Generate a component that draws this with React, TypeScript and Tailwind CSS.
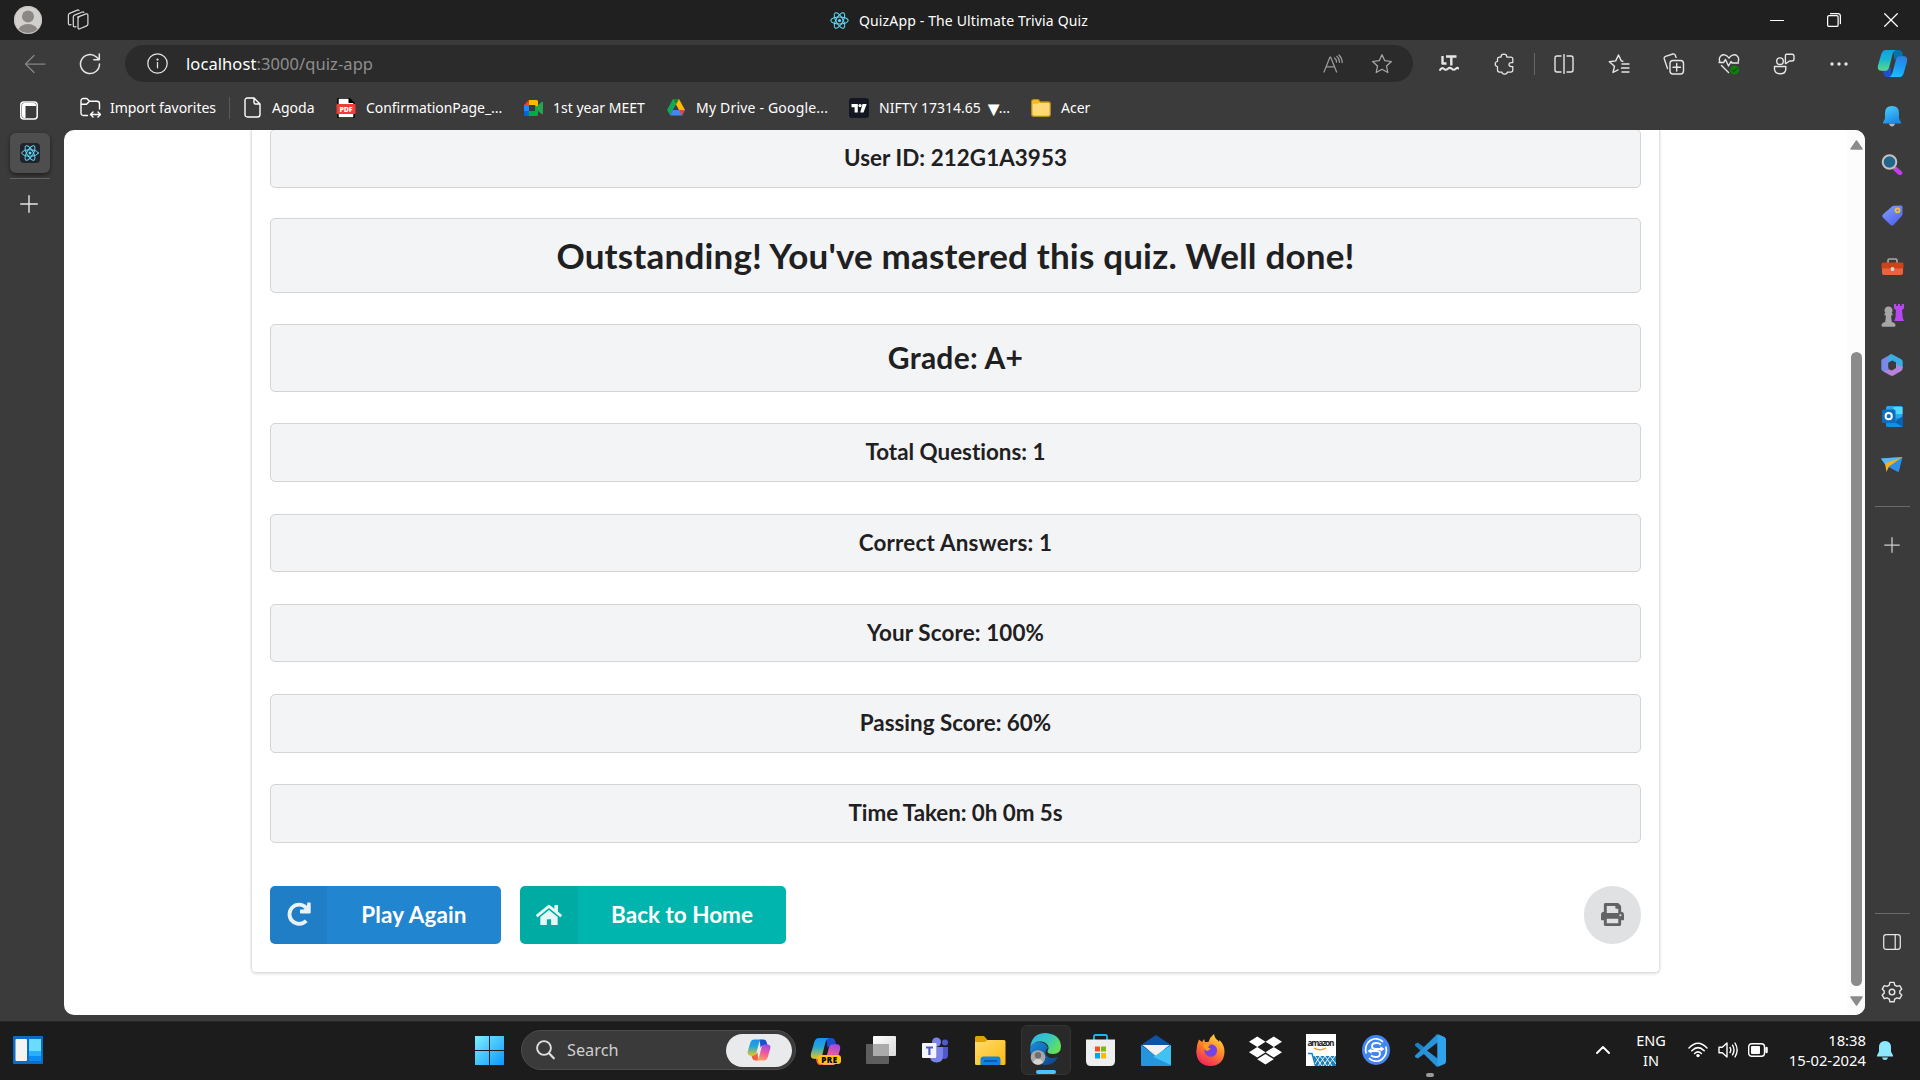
import React from "react";
import { FaHome, FaPrint, FaDropbox } from "react-icons/fa";

type SvgProps = {
  size?: number;
  w?: number;
  h?: number;
  box?: string;
  className?: string;
  children: React.ReactNode;
};

function Svg({ size = 20, w, h, box = "0 0 20 20", className = "", children }: SvgProps) {
  return (
    <svg
      width={w ?? size}
      height={h ?? size}
      viewBox={box}
      fill="none"
      stroke="currentColor"
      strokeWidth={1.25}
      strokeLinecap="round"
      strokeLinejoin="round"
      className={`block shrink-0 ${className}`}
    >
      {children}
    </svg>
  );
}

function ReactLogo({ size }: { size: number }) {
  return (
    <Svg size={size} box="0 0 24 24" className="text-[#61dafb]">
      <g strokeWidth="1.3">
        <ellipse cx="12" cy="12" rx="11" ry="4.3" />
        <ellipse cx="12" cy="12" rx="11" ry="4.3" transform="rotate(60 12 12)" />
        <ellipse cx="12" cy="12" rx="11" ry="4.3" transform="rotate(120 12 12)" />
      </g>
      <circle cx="12" cy="12" r="2" fill="currentColor" stroke="none" />
    </Svg>
  );
}

function TitleBar() {
  return (
    <header className="flex h-10 shrink-0 items-center justify-between bg-[#202020] text-white">
      <div className="flex w-[400px] items-center">
        <div className="ml-[14px] size-7">
          <svg width="28" height="28" viewBox="0 0 28 28">
            <clipPath id="avatar">
              <circle cx="14" cy="14" r="14" />
            </clipPath>
            <g clipPath="url(#avatar)">
              <rect width="28" height="28" fill="#d2d0ce" />
              <circle cx="14" cy="10.5" r="6" fill="#8a8785" />
              <ellipse cx="14" cy="25.5" rx="10" ry="7.5" fill="#8a8785" />
            </g>
            <circle cx="14" cy="14" r="13.5" fill="none" stroke="#c4c2c0" />
          </svg>
        </div>
        <Svg w={22} h={22} box="0 0 22 22" className="ml-[25px] text-[#d6d6d6]">
          <path d="M10.600 8.200 19 4.900q1.900-.6 1.900 1.300V15q0 1.300-1.200 1.800l-6.800 3q-1.900.7-1.900-1.200V9.900q0-1.100.9-1.700" />
          <path d="M8.900 17.600q-2.600 1-2.600-1.200V7.900q0-1.200 1.200-1.700l7.800-3.200q1.100-.4 1.600.3" />
          <path d="M4 15.600q-2.600.8-2.600-1.300V6q0-1.200 1.200-1.700L10.300 1.100q1.100-.4 1.700.3" />
        </Svg>
      </div>
      <div className="flex items-center">
        <ReactLogo size={19} />
        <span className="ml-[10px] w-[231px] font-['Noto_Sans',sans-serif] text-[14px] tracking-[0.14px] whitespace-nowrap">
          QuizApp - The Ultimate Trivia Quiz
        </span>
      </div>
      <div className="flex w-[400px] items-center justify-end gap-[43px] pr-[22px]">
        <Svg size={14} box="0 0 14 14">
          <path d="M.5 7.500h13" strokeWidth="1.100" />
        </Svg>
        <Svg size={14} box="0 0 14 14">
          <rect x=".6" y="2.600" width="10.500" height="10.800" rx="1.500" />
          <path d="M3.500.6h7.500q2.400 0 2.400 2.400v7.500" />
        </Svg>
        <Svg size={14} box="0 0 14 14">
          <path d="m.7.7 12.600 12.600M13.300.7.7 13.300" />
        </Svg>
      </div>
    </header>
  );
}

function CopilotColor({ size, blue = false }: { size: number; blue?: boolean }) {
  const id = blue ? "cb" : "cc";
  return (
    <svg width={size} height={size} viewBox="0 0 32 32" className="block shrink-0">
      <defs>
        <linearGradient id={`${id}1`} x1="0" y1="0" x2="0" y2="1">
          <stop offset="0" stopColor={blue ? "#0f9fe8" : "#1b8ff0"} />
          <stop offset=".45" stopColor={blue ? "#16b7d0" : "#25a7d8"} />
          <stop offset="1" stopColor={blue ? "#5ed88a" : "#e8c81c"} />
        </linearGradient>
        <linearGradient id={`${id}2`} x1=".6" y1="0" x2=".3" y2="1">
          <stop offset="0" stopColor={blue ? "#2f7fe0" : "#a24be8"} />
          <stop offset=".5" stopColor={blue ? "#1b9df6" : "#ee5a9a"} />
          <stop offset="1" stopColor={blue ? "#18c0ff" : "#ffa257"} />
        </linearGradient>
      </defs>
      <path d="M17 2h5q3 0 4 3l1.500 5H22q-3 0-4 3z" fill={blue ? "#0a6fae" : "#1a4fd0"} />
      <path d="M15 30h-4q-3 0-4-3l-1.500-5H10q3 0 4-3z" fill={blue ? "#1c4fd8" : "#f2603c"} />
      <path d="M9 2h10.500q-2.500.8-3.500 4.500L12.500 20q-.9 3.500-4.500 3.500H4.500Q0 23.500 1 18L4.500 6Q5.800 2 9 2z" fill={`url(#${id}1)`} />
      <path d="M23 30H12.500q2.500-.8 3.500-4.500L19.500 12q.9-3.500 4.500-3.500h3.500Q32 8.500 31 14l-3.500 12q-1.300 4-4.500 4z" fill={`url(#${id}2)`} />
    </svg>
  );
}

function Toolbar() {
  return (
    <div className="flex h-[47px] shrink-0 items-center text-[#e6e6e6]">
      <Svg w={22} h={20} box="0 0 22 20" className="ml-[24px] text-[#858585]">
        <path d="M21 10H1.500M10 1.500 1.500 10l8.500 8.500" />
      </Svg>
      <Svg size={22} box="0 0 22 22" className="ml-[33px]">
        <path d="M20.500 11A9.500 9.500 0 1 1 17.400 4l2.600 2.400M20.300 1v5.700h-5.500" strokeWidth="1.500" />
      </Svg>
      <div className="ml-[24px] flex h-[37px] w-[1288px] items-center rounded-full bg-[#2b2b2b]">
        <Svg size={21} box="0 0 21 21" className="ml-[22px]">
          <circle cx="10.500" cy="10.500" r="9.700" />
          <path d="M10.500 9.500v5.300" />
          <circle cx="10.500" cy="6.500" r=".5" fill="currentColor" />
        </Svg>
        <span className="ml-[18px] grow pt-px font-['Noto_Sans',sans-serif] text-[16.5px] tracking-[0.08px] whitespace-nowrap text-[#8f8f8f]">
          <span className="text-white">localhost</span>:3000/quiz-app
        </span>
        <Svg size={20} className="mr-[28px] text-[#9a9a9a]">
          <path d="m1 18 6-15h.6l6 15M3.300 12.800h8M11.500 4q2 1.600 2 4M13.800 2.300q2.700 2.500 2.700 6M16 1q3.200 3.200 3.200 7.500" />
        </Svg>
        <Svg size={22} box="0 0 22 22" className="mr-[20px] text-[#a8a8a8]">
          <path d="m11 1.700 2.800 6 6.600.8-4.900 4.500 1.300 6.500L11 16.300l-5.800 3.200 1.300-6.500L1.600 8.500l6.600-.8z" />
        </Svg>
      </div>
      <Svg size={20} className="mt-px ml-[26px]">
        <path d="M3.500 2v7.500h4M7 2.500h10.500M12.300 2.500v9" strokeWidth="2.400" strokeLinecap="butt" />
        <path d="M1 16q1.800-3 3.800-1.200t4 0 4 0 4 0 2.500-.3" strokeWidth="2" />
      </Svg>
      <Svg size={22} box="0 0 22 22" className="ml-[35px]">
        <path d="M7 4q0-2.800 2.900-2.800T12.800 4h4q2 0 2 2v3.600h-1.500q-2.300 0-2.300 2t2.300 2h1.500V17q0 2-2 2h-3.500q0 2-2.700 2T8 19H5.500q-2 0-2-2v-3.500q-2.300-.2-2.300-2.500t2.300-2.500V6q0-2 2-2z" />
      </Svg>
      <div className="ml-[18px] h-[22px] w-px bg-[#656565]" />
      <Svg size={20} className="ml-[19px]">
        <path d="M7 2H3Q1 2 1 4v12q0 2 2 2h4M13 2h4q2 0 2 2v12q0 2-2 2h-4M10 .6v18.800" strokeWidth="1.400" />
      </Svg>
      <Svg w={22} h={22} box="0 0 22 22" className="ml-[34px]">
        <path d="M6.500 13.200 5 19.500l5-2.700M6.500 13.200 1.300 8.700l6.400-.8L10.500 2l2.800 5.900 1.500.4M14 11h7M13.500 15h7.500M14 19h7" strokeWidth="1.400" />
      </Svg>
      <Svg w={22} h={22} box="0 0 22 22" className="ml-[33px]">
        <rect x="7" y="7.500" width="13.500" height="13.500" rx="3" strokeWidth="1.400" />
        <path d="M13.700 10.500v7.500M10 14.200h7.500M4.500 15.500 1.300 6q-.6-2 1.200-2.700L9.800 1q1.800-.5 2.500 1.200l.8 2.200" strokeWidth="1.400" />
      </Svg>
      <Svg w={22} h={22} box="0 0 22 22" className="ml-[33px]">
        <path d="M1.800 8.500Q.5 5 2.800 3q2-1.800 4.700-.9 2 .7 3.500 3 1.500-2.300 3.500-3 2.700-.9 4.700.9 2.300 2 1 5.500M1 9.500h4.500l2-3 3 6.500 2.500-4.500 1 1.500h6.500M3.500 12.500l7 7" strokeWidth="1.400" />
        <circle cx="16.500" cy="17" r="4.600" fill="#107c10" stroke="none" />
        <path d="m14.500 17 1.500 1.500 2.600-3" stroke="#063d06" strokeWidth="1" />
      </Svg>
      <Svg w={22} h={22} box="0 0 22 22" className="ml-[33px]">
        <circle cx="7" cy="8.200" r="3.300" strokeWidth="1.400" />
        <path d="M1.500 13.500h11.300v2.500q0 4.800-5.600 4.800T1.500 16zM13.500 1.200h5.500q2 0 2 2V6q0 2-2 2h-2.500L13 10.500q-.6.3-.6-.5V3q0-1.800 1.100-1.800z" strokeWidth="1.400" />
      </Svg>
      <Svg w={18} h={6} box="0 0 18 6" className="ml-[35px]">
        <g fill="currentColor" stroke="none">
          <circle cx="2" cy="3" r="1.700" />
          <circle cx="9" cy="3" r="1.700" />
          <circle cx="16" cy="3" r="1.700" />
        </g>
      </Svg>
      <div className="ml-[29px]">
        <CopilotColor size={31} blue />
      </div>
    </div>
  );
}

function Favorite({ icon, label, className }: { icon: React.ReactNode; label: React.ReactNode; className: string }) {
  return (
    <div className={`flex h-6 items-center ${className}`}>
      <div className="flex w-5 shrink-0 justify-center">{icon}</div>
      <span className="ml-[10px] whitespace-nowrap">{label}</span>
    </div>
  );
}

function FavoritesBar() {
  return (
    <div className="flex h-[43px] shrink-0 items-center pb-[2px] font-['Noto_Sans',sans-serif] text-[14px] text-white">
      <Svg w={18} h={19} box="0 0 18 19" className="ml-[20px] mt-[5px]">
        <rect x=".8" y="1" width="16.400" height="17" rx="3" strokeWidth="1.500" />
        <path d="M2 5.500V4q0-2 2-2h10q2 0 2 2v1H5.500v12H4q-2 0-2-2z" fill="currentColor" stroke="none" />
      </Svg>
      <Favorite
        className="ml-[42px] w-[135px] tracking-[-0.05px]"
        label="Import favorites"
        icon={
          <Svg size={21} box="0 0 21 21">
            <path d="M7.500 18.500H3.500q-2.500 0-2.500-2.500V4q0-2.500 2.500-2.500h3.300l2.700 2.700h7.500q2.500 0 2.500 2.500V12M1 7.200h5.500l3-3M11 17.500h9M13 15l-2.500 2.500L13 20M18 15l2.500 2.500L18 20" strokeWidth="1.400" />
          </Svg>
        }
      />
      <div className="ml-[14px] h-[22px] w-px bg-[#5a5a5a]" />
      <Favorite
        className="ml-[12px] w-[73px]"
        label="Agoda"
        icon={
          <Svg w={17} h={21} box="0 0 17 21">
            <path d="M3.500 1H10l6 6v10.500q0 2.500-2.500 2.500h-10Q1 20 1 17.500v-14Q1 1 3.500 1zM10 1v4.500q0 1.500 1.500 1.500H16" strokeWidth="1.400" />
          </Svg>
        }
      />
      <Favorite
        className="ml-[21px] w-[167px] tracking-[-0.05px]"
        label="ConfirmationPage_..."
        icon={
          <svg width="20" height="20" viewBox="0 0 20 20">
            <path d="M2 0h11l5 5v15H2z" fill="#fff" stroke="#000" strokeWidth="1.400" />
            <path d="M12.500 0v5H18z" fill="#000" />
            <rect x=".5" y="6" width="19" height="10" rx="1" fill="#f23b3b" />
            <text x="10" y="13.600" textAnchor="middle" fontSize="7" fontWeight="800" fill="#fff" fontFamily="Open Sans, sans-serif">
              PDF
            </text>
          </svg>
        }
      />
      <Favorite
        className="ml-[20px] w-[122px]"
        label="1st year MEET"
        icon={
          <svg width="19" height="16" viewBox="0 0 19 16">
            <path d="M0 5 5 0v5z" fill="#ea4335" />
            <path d="M0 5h5v6H0z" fill="#2684fc" />
            <path d="M0 11h5v5H1.500Q0 16 0 14.500z" fill="#0066da" />
            <path d="M5 0h7.500Q14 0 14 1.500V8l-3-2V5H5z" fill="#ffba00" />
            <path d="M5 11h6V5l3 3v6.500q0 1.500-1.500 1.500H5z" fill="#00ac47" />
            <path d="M11 8l6.500-6Q19 1.300 19 2.500v11q0 1.200-1.500.5z" fill="#23a64c" />
          </svg>
        }
      />
      <Favorite
        className="ml-[21px] w-[162px] tracking-[0.19px]"
        label="My Drive - Google..."
        icon={
          <svg width="18" height="17" viewBox="0 0 18 17">
            <path d="M6 0h6L3 16 0 11z" fill="#0fa958" />
            <path d="M6 0h6l6 11h-6z" fill="#ffba00" />
            <path d="M6 0h6L9 5.500z" fill="#188038" />
            <path d="M5.500 11H18l-3 5.500H3z" fill="#4285f4" />
            <path d="M12 11h6l-3 5.500z" fill="#ea4335" />
          </svg>
        }
      />
      <Favorite
        className="ml-[21px] w-[161px]"
        label={
          <span className="flex h-6 items-center">
            NIFTY 17314.65
            <span className="ml-[3px] -mb-[3px] w-[15px] text-[20px] leading-5 tracking-[-1px]">▼</span>
            ...
          </span>
        }
        icon={
          <svg width="20" height="20" viewBox="0 0 20 20">
            <rect width="20" height="20" rx="3" fill="#131722" />
            <path d="M2.500 6h6.300v8.500H5.600V9.200H2.500zM13.500 6h4.200L14.500 14.500h-3.300z" fill="#fff" />
            <circle cx="11" cy="7.600" r="1.600" fill="#fff" />
          </svg>
        }
      />
      <Favorite
        className="ml-[21px]"
        label="Acer"
        icon={
          <svg width="20" height="18" viewBox="0 0 20 18">
            <path d="M.7 2.700q0-2 2-2h4.600l2 2.300h8q2 0 2 2v10.300q0 2-2 2h-14.600q-2 0-2-2z" fill="#ffd977" stroke="#b98a10" strokeWidth="1.300" />
            <path d="M1.200 4.700V3q0-1.700 1.700-1.700h4L8.500 3 7 4.700z" fill="#f5b91a" />
          </svg>
        }
      />
    </div>
  );
}

function LeftRail() {
  return (
    <aside className="flex w-16 shrink-0 flex-col items-start text-[#e6e6e6]">
      <div className="ml-[10px] mt-[3px] flex h-10 w-10 items-center justify-center rounded-md bg-[#4e4e4e] shadow-[0_2px_4px_rgba(0,0,0,0.5)]">
        <div className="flex size-5 items-center justify-center rounded-sm bg-[#20232a]">
          <ReactLogo size={18} />
        </div>
      </div>
      <div className="ml-[10px] mt-[5px] h-px w-10 bg-[#636363]" />
      <Svg size={18} box="0 0 18 18" className="ml-[20px] mt-[16px]">
        <path d="M9 .7v16.600M.7 9h16.600" strokeWidth="1.400" />
      </Svg>
    </aside>
  );
}

function RailSlot({ h, children }: { h: string; children: React.ReactNode }) {
  return <div className={`flex w-full shrink-0 items-center justify-center ${h}`}>{children}</div>;
}

function RightRail() {
  return (
    <aside className="flex h-[931px] w-[54px] shrink-0 flex-col items-center text-[#e6e6e6]">
      <RailSlot h="h-[52px]">
        <svg width="18" height="21" viewBox="0 0 18 21">
          <defs>
            <linearGradient id="bellg" x1="0" y1="0" x2=".5" y2="1">
              <stop offset="0" stopColor="#4fd0fb" />
              <stop offset="1" stopColor="#1a8ce8" />
            </linearGradient>
          </defs>
          <path d="M6 17.500h6q-.6 3-3 3t-3-3z" fill="#b5b5b5" />
          <path d="M9 0q7 0 7 7v5.500l2 4V17.500H0v-1l2-4V7q0-7 7-7z" fill="url(#bellg)" />
        </svg>
      </RailSlot>
      <RailSlot h="h-[45px]">
        <svg width="22" height="21" viewBox="0 0 22 21">
          <path d="m14.500 15 4.500 4" stroke="#c43bf0" strokeWidth="4.500" strokeLinecap="round" />
          <path d="m12 12.500 2.500 2.300" stroke="#8a8a8a" strokeWidth="2" />
          <circle cx="8.500" cy="8" r="6.800" fill="#22668c" stroke="#c2c2c2" strokeWidth="2" />
        </svg>
      </RailSlot>
      <RailSlot h="h-[56px]">
        <svg width="21" height="21" viewBox="0 0 21 21">
          <defs>
            <linearGradient id="tagg" x1="0" y1="0" x2=".6" y2="1">
              <stop offset="0" stopColor="#7fa6fb" />
              <stop offset="1" stopColor="#5562ee" />
            </linearGradient>
          </defs>
          <path d="M12 .8 19 .5q1.500 0 1.500 1.500v7q0 1.200-.8 2L11.500 20q-1.500 1.200-3 0L.9 12.500q-1.200-1.500 0-3L10 1.600q.9-.8 2-.8z" fill="url(#tagg)" />
          <circle cx="15.500" cy="5.300" r="2" fill="none" stroke="#f5c518" strokeWidth="1.800" />
        </svg>
      </RailSlot>
      <RailSlot h="h-[46px]">
        <svg width="23" height="17" viewBox="0 0 23 17">
          <path d="M7 5V2.500Q7 1 8.500 1h6Q16 1 16 2.500V5" fill="none" stroke="#a9a9a9" strokeWidth="1.700" />
          <path d="M1 10h21v5q0 2-2 2H3q-2 0-2-2z" fill="#ec6240" />
          <path d="M2 4.500h19q1.500 0 1.500 1.500v4.500H.5V6Q.5 4.500 2 4.500z" fill="#cc4315" />
          <rect x="9.700" y="9" width="3.600" height="4" rx="1.500" fill="#d2d2d2" />
        </svg>
      </RailSlot>
      <RailSlot h="h-[52px]">
        <svg width="23" height="23" viewBox="0 0 23 23">
          <path d="M13 0h2.200v2h1.700V0h2.200v2h1.600V0H23v4.500L21 6l.8 8 1.200 3H13.200l1.200-3 .6-8-2-1.500z" fill="#b747ee" />
          <path d="M7.500 2.500a4 4 0 0 1 3 6.700h1v2.300h-1.500l.8 6.500q3.700 1 3.700 3.200 0 1.500-1.500 1.500H2Q.5 22.700.5 21.200.5 19 4.200 18L5 11.500H3.500V9.200h1a4 4 0 0 1 3-6.700z" fill="#a6a6a6" />
        </svg>
      </RailSlot>
      <RailSlot h="h-[48px]">
        <svg width="22" height="22" viewBox="0 0 22 22">
          <path d="M10.500 0 1.500 5Q.3 5.700.3 7v8q0 1.300 1 1.800l3.200 1.700q3-.5 3-3.500V9l4-2.500z" fill="#7a8be6" />
          <path d="M10.500 0 20.200 5.300q1.500.8 1.500 2.500v6.700L15 11V8.500l-4-2L7.500 9V3.500Q7.500 1 10.500 0z" fill="#38aee4" />
          <path d="M21.700 13q0 3-1.500 4l-7.700 4.500q-1.500.8-3 0L2 17.200q3.500.5 5.500-2l3.500 1.300 4-2.500v-3.500z" fill="#b483dc" />
          <path d="M11 6.500 15 8.700v4.600L11 15.500l-3.700-2.200V8.700z" fill="#3b3b3b" />
        </svg>
      </RailSlot>
      <RailSlot h="h-[54px]">
        <svg width="21" height="21" viewBox="0 0 21 21">
          <rect x="4" width="16.500" height="14" rx="1.500" fill="#28a8ea" />
          <path d="M11.500 1H20.500v7h-9z" fill="#50d9ff" />
          <path d="M4 12h17v7.500q0 1.500-1.500 1.500h-14Q4 21 4 19.500z" fill="#1490df" />
          <path d="m21 10-8.500 6 8.500 5z" fill="#0a5fae" />
          <rect y="3.500" width="13.500" height="13.500" rx="1.500" fill="#0f6cbd" />
          <circle cx="6.700" cy="10.200" r="3.100" fill="none" stroke="#fff" strokeWidth="2" />
        </svg>
      </RailSlot>
      <RailSlot h="h-[44px]">
        <svg width="22" height="16" viewBox="0 0 22 16">
          <path d="M0 1.500 21.500 0 18 14q-.4 1.300-1.500.7L9.500 11 3.500 7z" fill="#2d8fe8" />
          <path d="M0 1.500 21.500 0 4 7z" fill="#58b9f4" />
          <path d="M21.500 0 4 6.500 5.500 15 8 9.500z" fill="#f3b21e" />
        </svg>
      </RailSlot>
      <div className="mt-[19px] h-px w-[35px] shrink-0 bg-[#6a6a6a]" />
      <Svg size={16} box="0 0 16 16" className="mt-[30px] text-[#cfcfcf]">
        <path d="M8 .7v14.600M.7 8h14.600" />
      </Svg>
      <div className="grow" />
      <div className="h-px w-[35px] shrink-0 bg-[#6a6a6a]" />
      <Svg w={18} h={16} box="0 0 18 16" className="mt-[20px]">
        <rect x=".7" y=".7" width="16.600" height="14.600" rx="2.500" />
        <path d="M12.200 1v14" />
      </Svg>
      <Svg size={22} box="0 0 22 22" className="mb-[18px] mt-[31px]">
        <path d="m8.900 1.400-.6 2.700-2.300 1.300-2.700-.8-2.100 3.500 2 1.900v2.300l-2 1.800 2.100 3.600 2.700-.8 2.300 1.300.6 2.600h4.200l.6-2.600 2.300-1.300 2.700.8 2.100-3.600-2-1.800V10l2-1.900-2.100-3.500-2.700.8-2.300-1.300-.6-2.700z" strokeWidth="1.400" />
        <circle cx="11" cy="11.100" r="2.800" strokeWidth="1.400" />
      </Svg>
    </aside>
  );
}

type Row = { text: string; box: string };

const rows: Row[] = [
  { text: "User ID: 212G1A3953", box: "h-[59px] text-[22.4px] tracking-[0.06px]" },
  { text: "Outstanding! You've mastered this quiz. Well done!", box: "mt-[30px] h-[75px] text-[35px] tracking-[0.17px]" },
  { text: "Grade: A+", box: "mt-[31px] h-[68px] text-[30px] tracking-[0.25px]" },
  { text: "Total Questions: 1", box: "mt-[31px] h-[59px] text-[22.4px]" },
  { text: "Correct Answers: 1", box: "mt-[32px] h-[58px] text-[22.4px] tracking-[0.22px]" },
  { text: "Your Score: 100%", box: "mt-[32px] h-[58px] text-[22.4px] tracking-[0.14px]" },
  { text: "Passing Score: 60%", box: "mt-[32px] h-[59px] text-[22.4px]" },
  { text: "Time Taken: 0h 0m 5s", box: "mt-[31px] h-[59px] text-[22.4px] tracking-[-0.06px]" },
];

function RedoIcon() {
  return (
    <svg width="24" height="24" viewBox="0 0 24 24" fill="none">
      <path d="M19.200 18.700A9.600 9.600 0 1 1 19 5.600" stroke="currentColor" strokeWidth="3.800" />
      <path d="M20.300.5h2.700q.7 0 .7.700v9.300q0 1-1 1h-9q-.7 0-.7-.7V8.200q0-.8.8-.8h3l3.100-3z" fill="currentColor" />
    </svg>
  );
}

function ResultPage() {
  return (
    <main className="flex h-[885px] w-[1801px] shrink-0 overflow-hidden rounded-[10px] bg-white">
      <div className="flex w-[1783px] flex-col">
        <section className="ml-[187px] flex h-[843px] w-[1409px] flex-col rounded-b-[5px] border border-t-0 border-[#dedfdf] px-[18px] font-[Lato,sans-serif] font-bold shadow-[0_1px_3px_0_rgba(34,36,38,0.15)] [font-variant-ligatures:none]">
          <div className="-mt-px flex flex-col">
            {rows.map((r) => (
              <div
                key={r.text}
                className={`flex shrink-0 items-center justify-center rounded-[5px] border border-[#d4d4d5] bg-[#f3f4f5] pb-px whitespace-nowrap text-[#1f2021] ${r.box}`}
              >
                {r.text}
              </div>
            ))}
          </div>
          <div className="mt-[43px] flex h-[58px] items-center text-[22.5px] text-white">
            <button className="flex h-[58px] w-[231px] overflow-hidden rounded-[5px] bg-[#2185d0]">
              <span className="flex w-[57px] items-center justify-center self-stretch bg-black/5 pb-[2px] text-white/90">
                <RedoIcon />
              </span>
              <span className="flex grow items-center justify-center self-stretch pb-px tracking-[0.15px]">Play Again</span>
            </button>
            <button className="ml-[19px] flex h-[58px] w-[266px] overflow-hidden rounded-[5px] bg-[#00b5ad]">
              <span className="flex w-[58px] items-center justify-center self-stretch bg-black/5 pb-px text-white/90">
                <FaHome size={26} />
              </span>
              <span className="flex grow items-center justify-center self-stretch pb-px">Back to Home</span>
            </button>
            <div className="grow" />
            <button className="flex h-[58px] w-[57px] items-center justify-center rounded-full bg-[#e0e1e2] pb-px text-[#626364]">
              <FaPrint size={23} />
            </button>
          </div>
        </section>
      </div>
      <div className="flex grow flex-col items-center bg-[#fcfcfc] text-[#8b8b8b]">
        <svg width="13" height="10" viewBox="0 0 13 10" className="mt-[10px] shrink-0">
          <path d="M6.500 1 12 9H1z" fill="currentColor" stroke="currentColor" strokeWidth="1.500" strokeLinejoin="round" />
        </svg>
        <div className="mt-[202px] h-[634px] w-[11px] shrink-0 rounded-full bg-[#8b8b8b]" />
        <svg width="13" height="10" viewBox="0 0 13 10" className="mt-[10px] shrink-0">
          <path d="M6.500 9 12 1H1z" fill="currentColor" stroke="currentColor" strokeWidth="1.500" strokeLinejoin="round" />
        </svg>
      </div>
    </main>
  );
}

function Cell({ children }: { children: React.ReactNode }) {
  return <div className="flex h-full w-[55px] shrink-0 items-center justify-center">{children}</div>;
}

function VscodeLogo() {
  return (
    <svg width="31" height="33" viewBox="0 0 31 33" className="block">
      <path d="M22 0 9 13 2.800 8.500 0 10v1.500L22 32l2-3V6z" fill="#1c7fc4" />
      <path d="M22 33 9 20l-6.200 4.500L0 23v-1.500L22 1l2 3v23z" fill="#2a93d8" />
      <path d="M22.500 8.500 12 16.500l10.500 8z" fill="#1c1c1c" />
      <path d="m22.500 0 7 3Q31 4 31 5.500v22q0 1.500-1.500 2.500l-7 3z" fill="#2fa3ee" />
    </svg>
  );
}

function TaskIcons() {
  return (
    <div className="ml-[2px] flex h-full items-center">
      <Cell>
        <div className="flex flex-col items-center">
          <CopilotColor size={31} />
          <span className="-mt-[12px] ml-[8px] rounded-[3px] bg-[#ffc20e] px-[3px] font-['Open_Sans',sans-serif] text-[8px] leading-[9px] font-extrabold tracking-[0.5px] text-black">
            PRE
          </span>
        </div>
      </Cell>
      <Cell>
        <svg width="30" height="28" viewBox="0 0 30 28">
          <defs>
            <linearGradient id="tv1" x1="0" y1="0" x2="1" y2="1">
              <stop offset="0" stopColor="#fff" />
              <stop offset="1" stopColor="#d9d9d9" />
            </linearGradient>
          </defs>
          <rect x="7" width="23" height="20" rx="1" fill="url(#tv1)" />
          <rect y="8" width="23" height="20" rx="1" fill="#5e5e5e" />
          <path d="M7 8h16v12H7z" fill="#ababab" />
        </svg>
      </Cell>
      <Cell>
        <svg width="27" height="26" viewBox="0 0 27 26">
          <circle cx="14.500" cy="5" r="4.500" fill="#7b83eb" />
          <circle cx="23" cy="5.500" r="3" fill="#5059c9" />
          <path d="M18 10h8v8q0 4-4 4-2.500 0-4-2z" fill="#5059c9" />
          <path d="M8 10h13v9q0 6.500-6.500 6.500T8 19z" fill="#7b83eb" />
          <path d="M8 10h7v11H8z" fill="#4a50b5" />
          <rect y="6" width="14.500" height="15" rx="1" fill="#f4f4fb" />
          <path d="M4 9.500h7v2H8.500V18h-2.200v-6.500H4z" fill="#5059c9" />
        </svg>
      </Cell>
      <Cell>
        <svg width="31" height="29" viewBox="0 0 31 29">
          <defs>
            <linearGradient id="fold" x1="0" y1="0" x2="1" y2="1">
              <stop offset="0" stopColor="#ffdb6b" />
              <stop offset="1" stopColor="#fdb913" />
            </linearGradient>
          </defs>
          <path d="M0 1.500Q0 0 1.500 0H9l3.500 4H29v6H0z" fill="#e0a008" />
          <path d="M0 6h10l2.500-2H29q1.500 0 1.500 1.500V27.500Q30.500 29 29 29H1.500Q0 29 0 27.500z" fill="url(#fold)" />
          <path d="M5.500 29v-5.500q0-3 3-3h14q3 0 3 3V29z" fill="#1681d8" />
          <path d="M9 25h13" stroke="#0a4f96" strokeWidth="1.500" />
        </svg>
      </Cell>
      <Cell>
        <div className="relative flex h-[50px] w-[50px] items-center justify-center rounded-md border border-[#343434] bg-[#292929] pb-[3px]">
          <svg width="31" height="32" viewBox="0 0 31 32">
            <defs>
              <linearGradient id="eg1" x1="0" y1="0" x2="1" y2=".5">
                <stop offset="0" stopColor="#2fb0f0" />
                <stop offset=".6" stopColor="#35c8c0" />
                <stop offset="1" stopColor="#62e05c" />
              </linearGradient>
              <linearGradient id="eg2" x1="0" y1="0" x2="1" y2="1">
                <stop offset="0" stopColor="#1a8fdc" />
                <stop offset="1" stopColor="#0c3f86" />
              </linearGradient>
            </defs>
            <path d="M0 16Q1 9 9 9q7 0 9 6-4 3-2 7 3 5 12 2-4 8-12.500 8Q1 31 0 16z" fill="url(#eg2)" />
            <path d="M.3 14Q2 0 15.500 0 30 1 31 13q0 8-8 8-6 0-5.500-3 1.500-2 1-4-1.500-5-7.500-5.500Q4 8 .3 14z" fill="url(#eg1)" />
            <circle cx="8" cy="24.500" r="7.300" fill="#a9a9a9" />
            <circle cx="8" cy="22.300" r="3.200" fill="#6f6f6f" />
            <path d="M3 29.500q1-3.500 5-3.500t5 3.500Q8 34 3 29.500z" fill="#d5d5d5" />
          </svg>
          <div className="absolute bottom-0 left-[14px] h-1 w-5 rounded-full bg-[#4cc2ff]" />
        </div>
      </Cell>
      <Cell>
        <svg width="29" height="32" viewBox="0 0 29 32">
          <path d="M8 7V2.500Q8 1 9.500 1h10Q21 1 21 2.500V7" fill="none" stroke="#22b3ee" strokeWidth="1.800" />
          <path d="M0 5.500h29V27q0 5-5 5H5q-5 0-5-5z" fill="#efefef" />
          <path d="M9 12.500h5v5H9z" fill="#f25022" />
          <path d="M15 12.500h5v5h-5z" fill="#7fba00" />
          <path d="M9 19h5v5.500H9z" fill="#00a4ef" />
          <path d="M15 19h5v5.500h-5z" fill="#ffb900" />
        </svg>
      </Cell>
      <Cell>
        <svg width="30" height="31" viewBox="0 0 30 31">
          <path d="M0 10 15 0l15 10v6H0z" fill="#0f52a5" />
          <path d="M2 10h26L15 22z" fill="#ececec" />
          <path d="M0 10l15 11 15-11v20q0 1-1 1H1q-1 0-1-1z" fill="#2596dd" />
          <path d="M30 10 12.500 22 30 30z" fill="#41c2f3" />
          <path d="M1.500 10h27L15 19.500z" fill="#f1f1f1" />
        </svg>
      </Cell>
      <Cell>
        <svg width="29" height="32" viewBox="0 0 29 32">
          <defs>
            <linearGradient id="ff" x1=".8" y1="0" x2=".3" y2="1">
              <stop offset="0" stopColor="#ffe24a" />
              <stop offset=".45" stopColor="#ff8a24" />
              <stop offset="1" stopColor="#f0225f" />
            </linearGradient>
          </defs>
          <path d="M3 5.500 6 8l2-3 1 3h3.500Q14 3 18 0q.5 4 4 6.500l1 1.500.5-2Q28.500 11 28.500 18q-.7 13.500-14 14Q1 31.500.3 18 .3 11 3 5.500z" fill="url(#ff)" />
          <circle cx="14.800" cy="16.500" r="6.300" fill="#7542e5" />
          <path d="M7 10.500q4-2 8 .5-2.500.3-3 2.500l2.500 1q-1 2-4 2.500-3-2.500-3.500-6.500z" fill="#ff9a26" />
        </svg>
      </Cell>
      <Cell>
        <FaDropbox size={33} color="#fff" />
      </Cell>
      <Cell>
        <svg width="30" height="32" viewBox="0 0 30 32">
          <rect width="30" height="32" fill="#fff" />
          <text x="15" y="12" textAnchor="middle" fontSize="8.300" fontWeight="700" fill="#222" textLength="27" fontFamily="Open Sans, sans-serif">
            amazon
          </text>
          <path d="M8 14q6 3.500 12 0" fill="none" stroke="#f79a1c" strokeWidth="1.300" />
          <path d="M2 19.500h4L9.500 32" fill="none" stroke="#1c80b8" strokeWidth="1.500" />
          <path d="M7.500 22H30v10H9.500z" fill="#1c80b8" />
          <path d="m9 22 7 10M14 22l7 10M19 22l7 10M24 22l6 8M14 22l-5 8M19 22l-7 10M24 22l-7 10M29 22l-7 10" stroke="#fff" strokeWidth=".9" />
        </svg>
      </Cell>
      <Cell>
        <svg width="28" height="30" viewBox="0 0 28 30">
          <ellipse cx="14" cy="15" rx="14" ry="15" fill="#4285f4" />
          <g fill="none" stroke="#fff" strokeWidth="2">
            <path d="M4.200 18.500A10.300 11 0 0 1 21 6.800M23.800 11.500A10.300 11 0 0 1 7 23.200" strokeWidth="1.700" />
            <path d="M19 9.500q-2-1.500-4.500-1.500-4.500 0-4.500 3.300 0 2.700 3 2.700h6.500M9 20.500q2 1.500 4.500 1.500 4.500 0 4.500-3.300 0-2.700-3-2.700H8.500" strokeWidth="1.800" />
          </g>
          <path d="m18.500 11.300 4 2.700-4 2.700zM9.500 13.300l-4 2.700 4 2.700z" fill="#fff" />
        </svg>
      </Cell>
      <Cell>
        <div className="relative">
          <VscodeLogo />
          <div className="absolute -bottom-[10px] left-[11px] h-1 w-2 rounded-full bg-[#9a9a9a]" />
        </div>
      </Cell>
    </div>
  );
}

function Taskbar() {
  return (
    <footer className="flex h-[59px] shrink-0 items-center border-t border-[#262626] bg-[#1c1c1c] pb-[2px] font-['Noto_Sans',sans-serif] text-white">
      <svg width="30" height="28" viewBox="0 0 30 28" className="ml-[13px] shrink-0">
        <rect width="30" height="28" rx="1" fill="#0b6cc8" />
        <rect x="2.500" y="3" width="11.500" height="22" rx="1" fill="#f4f4f4" />
        <path d="M16 3h12v12H16z" fill="#6adcff" />
        <path d="M16 15h12v5H16z" fill="#28b0ff" />
        <path d="M16 20h12v5H16z" fill="#0a8cf5" />
      </svg>
      <svg width="29" height="29" viewBox="0 0 29 29" className="ml-[432px] shrink-0">
        <defs>
          <linearGradient id="win" gradientUnits="userSpaceOnUse" x1="0" y1="0" x2="29" y2="29">
            <stop offset="0" stopColor="#7df0ff" />
            <stop offset="1" stopColor="#0c97fb" />
          </linearGradient>
        </defs>
        <path d="M0 0h14v14H0zM15 0h14v14H15zM0 15h14v14H0zM15 15h14v14H15z" fill="url(#win)" />
      </svg>
      <div className="ml-[17px] flex h-10 w-[275px] shrink-0 items-center rounded-full border border-[#4c4c4c] bg-[#3a3a3a]">
        <Svg w={19} h={20} box="0 0 19 20" className="ml-[14px] text-[#e0e0e0]">
          <circle cx="8" cy="8" r="6.900" strokeWidth="1.900" />
          <path d="m13 13.300 4.800 5" strokeWidth="2.200" />
        </Svg>
        <span className="ml-[12px] grow pt-px text-[16.300px] text-[#cfcfcf]">Search</span>
        <div className="mr-[3px] flex h-[33px] w-[66px] items-center justify-center rounded-full bg-[#e9eaec]">
          <CopilotColor size={24} />
        </div>
      </div>
      <TaskIcons />
      <div className="grow" />
      <Svg w={14} h={8} box="0 0 14 8">
        <path d="m1 7 6-6 6 6" strokeWidth="1.900" />
      </Svg>
      <div className="ml-[26px] w-[30px] text-center text-[14.500px] leading-5">
        ENG
        <br />
        IN
      </div>
      <Svg w={20} h={16} box="0 0 20 16" className="ml-[22px]">
        <path d="M1 6q9-9.500 18 0M3.800 8.700q6.200-6.200 12.400 0M6.600 11.500q3.400-3.300 6.800 0" strokeWidth="1.500" />
        <circle cx="10" cy="13.600" r="1.700" fill="currentColor" stroke="none" />
      </Svg>
      <Svg w={20} h={18} box="0 0 20 18" className="ml-[10px]">
        <path d="M1 6.300h3.300L9 2v14l-4.700-4.300H1zM12 6.500q1.600 2.500 0 5M14.500 4.200q3 4.800 0 9.600M17 2q4.300 7 0 14" strokeWidth="1.400" />
      </Svg>
      <Svg w={20} h={14} box="0 0 20 14" className="ml-[10px]">
        <rect x=".7" y=".7" width="15.800" height="12.600" rx="3" strokeWidth="1.400" />
        <rect x="3" y="3" width="9" height="8" rx="1" fill="currentColor" stroke="none" />
        <path d="M18.500 5v4" strokeWidth="2.500" />
      </Svg>
      <div className="ml-[10px] w-[88px] text-right text-[14.800px] leading-5 whitespace-nowrap">
        18:38
        <br />
        15-02-2024
      </div>
      <svg width="16" height="19" viewBox="0 0 16 19" className="mr-[27px] ml-[11px]">
        <path d="M8 0q6 0 6 6.500v4l2 4V15.500H0v-1l2-4v-4Q2 0 8 0z" fill="#8ce8ff" />
        <path d="M5 16.500h6q-.7 2.500-3 2.500t-3-2.500z" fill="#8ce8ff" />
      </svg>
    </footer>
  );
}

export default function App() {
  return (
    <div className="flex h-[1080px] w-[1920px] flex-col overflow-hidden bg-[#3b3b3b]">
      <TitleBar />
      <Toolbar />
      <FavoritesBar />
      <div className="flex h-[891px] shrink-0">
        <LeftRail />
        <ResultPage />
        <div className="-mt-[40px] flex">
          <RightRail />
        </div>
      </div>
      <Taskbar />
    </div>
  );
}
